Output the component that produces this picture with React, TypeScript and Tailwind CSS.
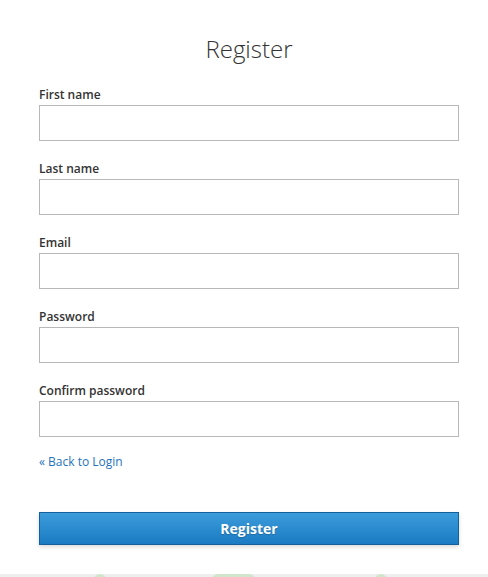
import React from "react";

const fields = [
  { id: "firstName", label: "First name", type: "text" },
  { id: "lastName", label: "Last name", type: "text" },
  { id: "email", label: "Email", type: "email" },
  { id: "password", label: "Password", type: "password" },
  { id: "confirmPassword", label: "Confirm password", type: "password" },
];

const App: React.FC = () => {
  return (
    <div
      className="w-full h-[577px] bg-white overflow-hidden flex flex-col"
      style={{ fontFamily: '"Open Sans", "Liberation Sans", sans-serif' }}
    >
      <div className="pl-[39px] pr-[29px] flex flex-col">
        {/* Title */}
        <h1 className="pt-[33px] text-center text-[24px] leading-[32px] font-light text-[#333333]">
          Register
        </h1>

        {/* Form */}
        <form className="mt-[22px] flex flex-col gap-[20px]" onSubmit={(e) => e.preventDefault()}>
          {fields.map((f) => (
            <div key={f.id} className="flex flex-col">
              <label htmlFor={f.id} className="text-[12px] leading-[16px] font-semibold text-[#333333] mb-[2px]">
                {f.label}
              </label>
              <input
                id={f.id}
                type={f.type}
                className="h-[36px] w-full border border-[#b8b8b8] bg-white px-2 text-[13px] outline-none"
              />
            </div>
          ))}
        </form>

        {/* Back link */}
        <div className="mt-[17px] text-[12px] leading-[16px]">
          <a href="#" className="block w-fit text-[#1f74bd]">
            « Back to Login
          </a>
        </div>

        {/* Submit */}
        <button
          type="button"
          className="mt-[42px] block w-full h-[33px] border border-[#145f9c] bg-gradient-to-b from-[#3b9cdb] to-[#1a7bc3] text-white text-[14px] leading-[20px] font-bold shadow-[0_2px_4px_rgba(0,0,0,0.15)] [text-shadow:0_1px_1px_rgba(0,0,0,0.2)]"
        >
          Register
        </button>
      </div>

      {/* Footer strip */}
      <div className="mt-[29px] h-[20px] shrink-0 bg-[#eeeeee] flex">
        <div className="ml-[94px] w-[12px] h-full rounded-t-full bg-[#cfe5cc]" />
        <div className="ml-[106px] w-[43px] h-full rounded-t-[6px] bg-[#cfe5cc]" />
        <div className="ml-[120px] w-[12px] h-full rounded-t-full bg-[#cfe5cc]" />
      </div>
    </div>
  );
};

export default App;
